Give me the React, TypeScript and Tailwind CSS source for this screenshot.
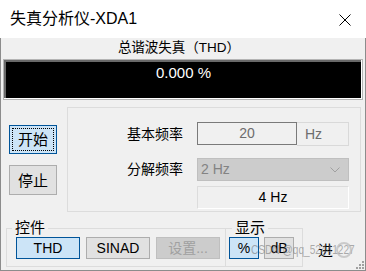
const font = "font-['Liberation_Sans','Noto_Sans_CJK_SC',sans-serif]";

function WinButton({
  label,
  variant = "normal",
  className = "",
}: {
  label: string;
  variant?: "normal" | "active" | "focused" | "disabled";
  className?: string;
}) {
  const look =
    variant === "active" || variant === "focused"
      ? "bg-[#cce4f7] border-[#005499] text-black"
      : variant === "disabled"
        ? "bg-[#cccccc] border-[#bfbfbf] text-[#a0a0a0]"
        : "bg-[#e1e1e1] border-[#adadad] text-black";
  return (
    <div className={`flex items-center justify-center border ${look} ${className}`}>
      {variant === "focused" ? (
        <div className="flex h-full w-full items-center justify-center border border-dotted border-black">
          {label}
        </div>
      ) : (
        label
      )}
    </div>
  );
}

export default function App() {
  return (
    <div className={`relative flex h-[271px] w-[366px] flex-col overflow-hidden bg-[#f0f0f0] ${font}`}>
      {/* title bar */}
      <div className="flex h-[38px] items-center justify-between bg-white pl-[10px] pr-[15px]">
        <span className="text-[16px] leading-[20px] text-black">失真分析仪-XDA1</span>
        <svg width="12" height="12" viewBox="0 0 12 12" className="mt-[1px]">
          <path d="M0.5 0.5 L11.5 11.5 M11.5 0.5 L0.5 11.5" stroke="#000" strokeWidth="1" fill="none" />
        </svg>
      </div>

      <div className="flex flex-1 flex-col border-x border-b border-[#8c8c8c]">
        <div className="h-[21px] pr-[8px] text-center text-[13.5px] leading-[19px] text-black">总谐波失真（THD）</div>

        {/* display */}
        <div className="mx-[2px] h-[41px] border border-[#b4b4b4] bg-white pb-px pr-px">
          <div className="h-full border-l-2 border-t-2 border-[#696969] bg-black pt-[2px] text-center text-[15px] leading-[18px] text-white">
            0.000 %
          </div>
        </div>

        {/* middle */}
        <div className="mt-[7px] flex pl-[8px]">
          <div className="flex flex-col pt-[18px] text-[15px] leading-none">
            <WinButton label="开始" variant="focused" className="h-[29px] w-[48px] p-[2px]" />
            <WinButton label="停止" className="mt-[11px] h-[30px] w-[48px]" />
          </div>
          <div className="ml-[10px] flex h-[105px] w-[294px] flex-col border border-[#dcdcdc] pl-[59px] pt-[14px] text-[14px]">
            <div className="flex h-[24px] items-center">
              <span className="w-[70px]">基本频率</span>
              <div className="flex h-[23px] w-[100px] items-center justify-center self-start border border-[#7a7a7a] text-[14px] text-[#6d6d6d]">
                20
              </div>
              <div className="flex h-[24px] w-[52px] items-center pl-[8px] border border-[#d9d9d9] border-l-0 text-[14px] text-[#6d6d6d]">
                Hz
              </div>
            </div>
            <div className="mt-[12px] flex h-[23px] items-center">
              <span className="w-[70px]">分解频率</span>
              <div className="flex h-[23px] w-[152px] items-center justify-between border border-[#bfbfbf] bg-[#cccccc] pl-[3px] pr-[8px] text-[14px] text-[#838383]">
                <span>2 Hz</span>
                <svg width="10" height="6" viewBox="0 0 10 6">
                  <path d="M0.5 0.5 L5 5 L9.5 0.5" stroke="#a0a0a0" fill="none" />
                </svg>
              </div>
            </div>
            <div className="mt-[5px] flex">
              <div className="w-[70px]" />
              <div className="flex h-[23px] w-[152px] items-center justify-center border border-white border-l-[#dcdcdc] border-t-[#dcdcdc] text-[14px] text-black">
                4 Hz
              </div>
            </div>
          </div>
        </div>

        {/* bottom */}
        <div className="mt-[6px] flex items-start pl-[5px]">
          <fieldset className="h-[49px] w-[220px] border border-[#dcdcdc]">
            <legend className="ml-[5px] px-[3px] text-[15px] leading-[20px]">控件</legend>
            <div className="-mt-[1px] flex gap-[6px] pl-[9px] text-[14px]">
              <WinButton label="THD" variant="active" className="h-[22px] w-[64px]" />
              <WinButton label="SINAD" className="h-[22px] w-[64px]" />
              <WinButton label="设置..." variant="disabled" className="h-[22px] w-[64px]" />
            </div>
          </fieldset>
          <fieldset className="-ml-[1px] h-[49px] w-[78px] border border-[#dcdcdc]">
            <legend className="ml-[6px] px-[3px] text-[15px] leading-[20px]">显示</legend>
            <div className="-mt-[1px] flex gap-[5px] pl-[3px] text-[14px]">
              <WinButton label="%" variant="active" className="h-[22px] w-[30px]" />
              <WinButton label="dB" className="h-[22px] w-[30px]" />
            </div>
          </fieldset>
          <span className="ml-[15px] mt-[23px] text-[15px] leading-[20px]">进</span>
        </div>
      </div>

      {/* watermark */}
      <div className="pointer-events-none absolute left-[251px] top-[242px] origin-left scale-x-75 whitespace-nowrap text-[13.5px] leading-[16px] text-[#7a7a7a]/60">
        CSDN @qq_52441227
      </div>
      <div className="pointer-events-none absolute left-[336px] top-[242px] h-[16px] w-[16px] rounded-full border-2 border-[#b0b0b0]/60" />

      {/* resize grip */}
      <svg className="absolute bottom-[1px] right-[1px]" width="10" height="10" viewBox="0 0 10 10">
        {[
          [8, 2],
          [5, 5],
          [8, 5],
          [2, 8],
          [5, 8],
          [8, 8],
        ].map(([x, y]) => (
          <rect key={`${x}-${y}`} x={x - 1} y={y - 1} width="2" height="2" fill="#a0a0a0" />
        ))}
      </svg>
    </div>
  );
}
